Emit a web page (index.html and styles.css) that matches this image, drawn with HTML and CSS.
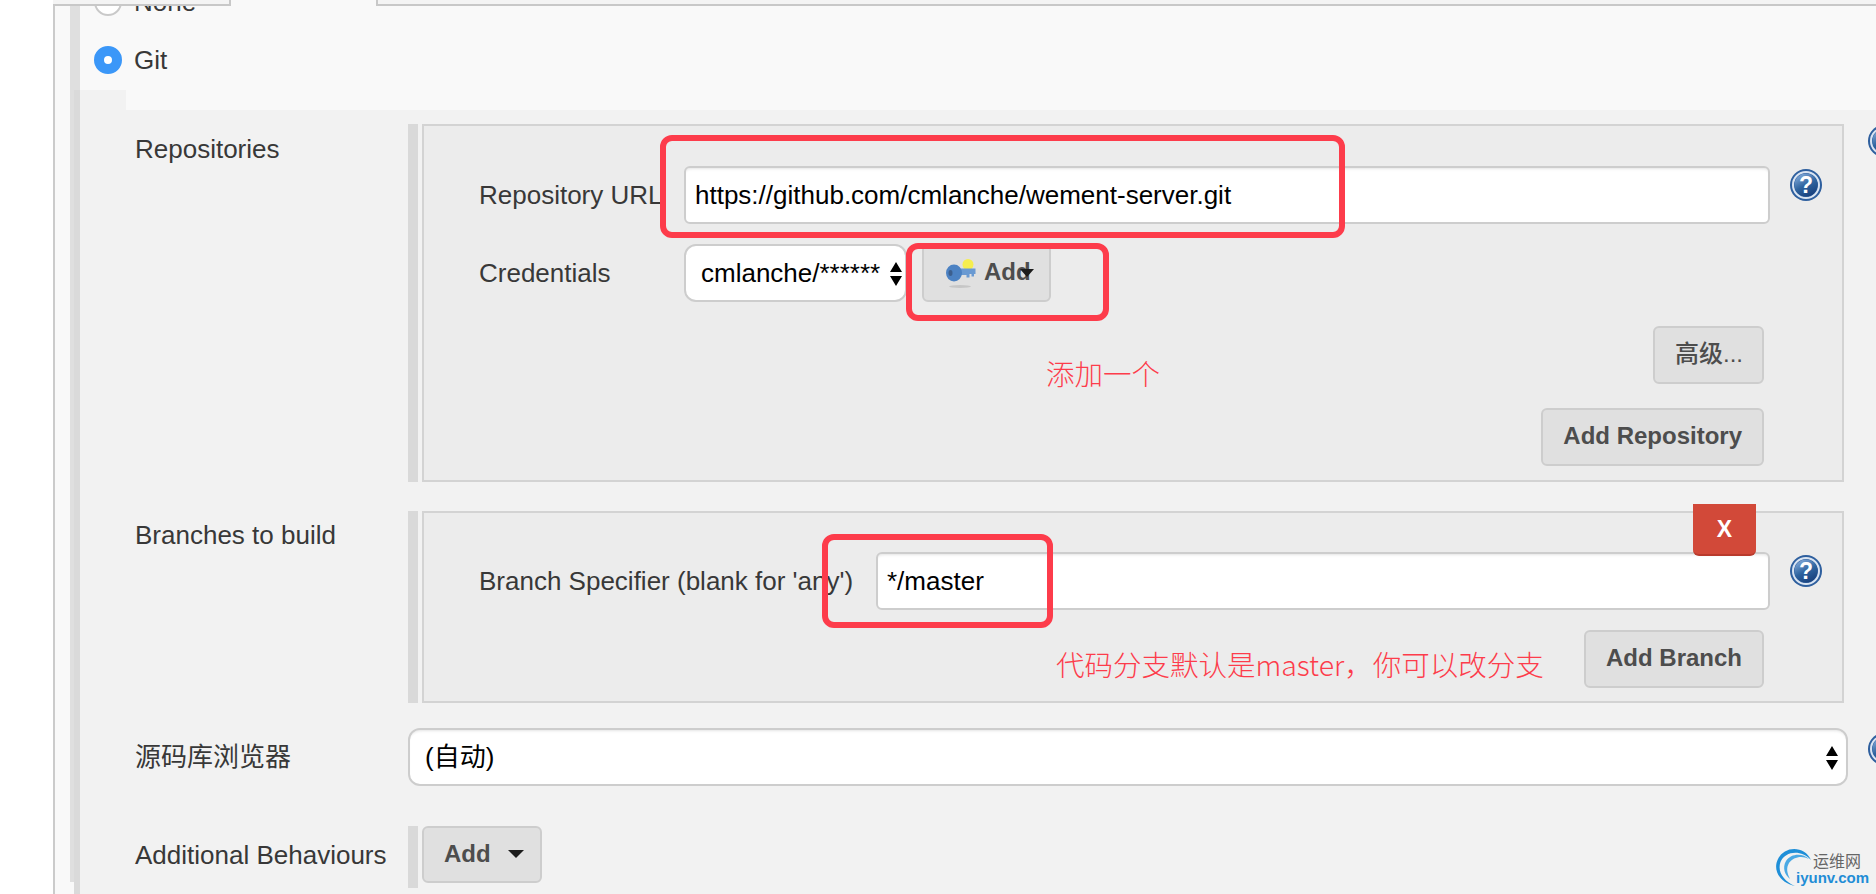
FILE: index.html
```html
<!DOCTYPE html>
<html lang="zh-CN">
<head>
<meta charset="utf-8">
<title>Git</title>
<link rel="stylesheet" href="styles.css">
</head>
<body>
<svg class="defs" width="0" height="0" aria-hidden="true">
  <defs>
    <linearGradient id="helpFill" x1="0.2" y1="0.05" x2="0.7" y2="1">
      <stop offset="0" stop-color="#7ea6d6"/>
      <stop offset="0.5" stop-color="#2f649f"/>
      <stop offset="1" stop-color="#173f7c"/>
    </linearGradient>
    <symbol id="help" viewBox="0 0 32 32">
      <circle cx="16" cy="16" r="16" fill="#2e5f9e"/>
      <circle cx="16" cy="16" r="13" fill="none" stroke="#d9e4f2" stroke-width="2"/>
      <circle cx="16" cy="16" r="11.5" fill="url(#helpFill)"/>
      <text x="16" y="24" text-anchor="middle" class="help-mark">?</text>
    </symbol>
    <symbol id="updown" viewBox="0 0 12 24">
      <path d="M6 0 12 10H0Z M0 14H12L6 24Z" fill="#000"/>
    </symbol>
  </defs>
</svg>

<div class="page">
  <div class="frame">
    <div class="tabs">
      <div class="tab tab-first"></div>
      <div class="tab tab-rest"></div>
    </div>
    <div class="section">
      <div class="radio-row radio-none"><span class="radio"></span><span class="radio-text">None</span></div>
      <div class="radio-row radio-git"><span class="radio radio-on"></span><span class="radio-text">Git</span></div>

      <div class="git">
        <div class="notch"></div>
        <div class="git-body">

          <div class="row">
            <div class="row-label row-label-repo">Repositories</div>
            <div class="group">
              <div class="panel panel-repo">
                <div class="fld">
                  <div class="fld-label">Repository URL</div>
                  <div class="input">https://github.com/cmlanche/wement-server.git</div>
                  <svg class="help"><use href="#help"/></svg>
                </div>
                <div class="fld fld-cred">
                  <div class="fld-label">Credentials</div>
                  <div class="select select-cred">cmlanche/******<svg class="updown"><use href="#updown"/></svg></div>
                  <div class="btn btn-cred">
                    <svg class="key" viewBox="0 0 30 30" aria-hidden="true">
                      <ellipse cx="14" cy="28.500" rx="11" ry="1.500" fill="#c6c6c6"/>
                      <circle cx="22" cy="6.500" r="5.500" fill="#f6ee4e"/>
                      <path d="M12 10.500H29.500V16H28V18.500H25.500V16H23.500V19.500H20.500V17H12Z" fill="#6a9ad2"/>
                      <ellipse cx="8" cy="15" rx="8" ry="8.500" fill="#4c82c3"/>
                      <ellipse cx="4.500" cy="15" rx="2" ry="3" fill="#3c5f8e"/>
                    </svg>
                    <span>Add</span>
                    <i class="caret caret-over"></i>
                  </div>
                </div>
                <div class="actions"><div class="btn btn-adv">高级...</div></div>
                <div class="actions"><div class="btn">Add Repository</div></div>
              </div>
              <svg class="help help-outer"><use href="#help"/></svg>
            </div>
          </div>

          <div class="row row-branch">
            <div class="row-label">Branches to build</div>
            <div class="group">
              <div class="panel panel-branch">
                <div class="btn-x">X</div>
                <div class="fld">
                  <div class="fld-label fld-label-wide">Branch Specifier (blank for 'any')</div>
                  <div class="input">*/master</div>
                  <svg class="help"><use href="#help"/></svg>
                </div>
                <div class="actions actions-branch"><div class="btn">Add Branch</div></div>
              </div>
            </div>
          </div>

          <div class="row row-browser">
            <div class="row-label row-label-mid">源码库浏览器</div>
            <div class="select select-full">(自动)<svg class="updown"><use href="#updown"/></svg></div>
            <svg class="help help-browser"><use href="#help"/></svg>
          </div>

          <div class="row row-behave">
            <div class="row-label row-label-behave">Additional Behaviours</div>
            <div class="add-wrap">
              <div class="btn btn-add">Add<i class="caret"></i></div>
            </div>
          </div>

        </div>
      </div>
    </div>
  </div>

  <div class="mark mark-url"></div>
  <div class="mark mark-add"></div>
  <div class="mark mark-branch"></div>
  <div class="note note-add">添加一个</div>
  <div class="note note-branch">代码分支默认是master&#xFF0C;你可以改分支</div>

  <div class="logo">
    <svg class="logo-arc" viewBox="0 0 50 42" aria-hidden="true">
      <path d="M38 14C32 0 12 -1 5 13C-1 25 8 37 22 40C11 35 4 26 7.500 16C12 5 28 3 38 14Z" fill="#1f8fd8"/>
      <path d="M36 13C30 7 18 7 13 15C9 22 12 29 17 33C14 27 13 22 16 17C20 11 29 9 36 13Z" fill="#4aa9e4"/>
    </svg>
    <div class="logo-cn">运维网</div>
    <div class="logo-en">iyunv.com</div>
  </div>
</div>
</body>
</html>
```

FILE: styles.css
```css
* { box-sizing: border-box; }

html, body {
  margin: 0;
  padding: 0;
  background: #fff;
}

body {
  font-family: "Liberation Sans", "Noto Sans CJK SC", sans-serif;
  font-size: 26px;
  color: #383838;
}

.defs { position: absolute; }

.page {
  position: relative;
  width: 1876px;
  height: 894px;
  padding-left: 53px;
  overflow: hidden;
}

.frame {
  height: 100%;
  border-left: 2px solid #cbcbcb;
  background: #f9f9f9;
}

/* tabs */
.tabs {
  position: relative;
  z-index: 1;
  display: flex;
  height: 6px;
  margin-left: -2px;
  justify-content: space-between;
}

.tab {
  background: #f4f4f4;
  border-bottom: 2px solid #c8c8c8;
}

.tab-first {
  width: 178px;
  border-right: 2px solid #c8c8c8;
}

.tab-rest {
  flex: 0 0 1500px;
  border-left: 2px solid #c8c8c8;
}

/* radios */
.section {
  height: 100%;
  margin-left: 15px;
  border-left: 10px solid #dfdfdf;
}

.radio-row {
  display: flex;
  align-items: center;
  height: 28px;
  padding-left: 14px;
  gap: 12px;
}

.radio-none { margin-top: -18px; }
.radio-git { margin-top: 30px; }

.radio {
  width: 28px;
  height: 28px;
  flex: none;
  border: 2px solid #c9c9c9;
  border-radius: 50%;
  background: #fff;
}

.radio-on {
  border: 10px solid #3b97f8;
}

/* git block */
.git {
  margin-top: 16px;
  margin-left: -6px;
  border-left: 6px solid #dadada;
}

.notch {
  width: 46px;
  height: 20px;
  background: #f2f2f2;
}

.git-body {
  height: 790px;
  padding-top: 14px;
  background: #f2f2f2;
}

.row { display: flex; }

.row-label {
  flex: none;
  width: 328px;
  padding-left: 55px;
  line-height: 48px;
}

.row-label-repo { padding-top: 1px; }
.row-label-mid { align-self: center; }
.row-label-behave { align-self: center; padding-bottom: 4px; }

.row-branch { margin-top: 29px; }
.row-browser { margin-top: 25px; }
.row-behave { margin-top: 40px; }

.group {
  position: relative;
  display: flex;
  padding-left: 14px;
}

.panel {
  position: relative;
  width: 1422px;
  border: 2px solid #d3d3d3;
  background: #ececec;
}

.group::before,
.add-wrap::before {
  content: "";
  position: absolute;
  left: 0;
  top: 0;
  bottom: 0;
  width: 10px;
  background: #d9d9d9;
}

.panel-repo { height: 358px; padding-top: 40px; }
.panel-branch { height: 192px; padding-top: 39px; }

.fld {
  display: flex;
  align-items: center;
  padding-right: 20px;
}

.fld-cred { margin-top: 20px; }

.fld-label {
  flex: none;
  width: 260px;
  padding-left: 55px;
  white-space: nowrap;
}

.fld-label-wide { width: 452px; }

.input {
  flex: 1;
  height: 58px;
  padding-left: 9px;
  border: 2px solid #cdcdcd;
  border-radius: 6px;
  background: #fff;
  color: #000;
  line-height: 54px;
  box-shadow: inset 0 3px 3px -2px #e4e4e4;
  white-space: nowrap;
}

.help {
  flex: none;
  align-self: flex-start;
  width: 32px;
  height: 32px;
  margin-top: 3px;
  margin-left: 20px;
}

.help-mark {
  fill: #fff;
  font-family: "Liberation Sans", sans-serif;
  font-size: 23px;
  font-weight: 700;
}

.help-outer {
  margin-top: 1px;
  margin-left: 24px;
}

.help-browser { margin-top: 5px; }

.select {
  position: relative;
  flex: none;
  height: 58px;
  border: 2px solid #cdcdcd;
  border-radius: 12px;
  background: #fff;
  color: #000;
  line-height: 54px;
  white-space: nowrap;
}

.select-cred {
  width: 223px;
  padding-left: 15px;
}

.select-full {
  width: 1440px;
  padding-left: 15px;
  box-shadow: inset 0 3px 3px -2px #e4e4e4;
}

.updown {
  position: absolute;
  top: 16px;
  right: 3px;
  width: 12px;
  height: 24px;
}

.select-full .updown { right: 8px; }

/* buttons */
.btn {
  position: relative;
  display: flex;
  align-items: center;
  flex: none;
  height: 58px;
  padding: 0 20px 3px;
  border: 2px solid #cdcdcd;
  border-radius: 6px;
  background: #e0e0e0;
  color: #4d4d4d;
  font-size: 24px;
  font-weight: 700;
  line-height: 48px;
  white-space: nowrap;
}

.btn-cred {
  width: 129px;
  margin-left: 15px;
  padding: 0 0 3px 22px;
  gap: 8px;
}

.key {
  flex: none;
  width: 30px;
  height: 30px;
  margin-top: 3px;
}

.btn-adv {
  width: 111px;
  padding: 0 0 3px 20px;
  font-weight: 500;
}

.actions {
  display: flex;
  justify-content: flex-end;
  margin-top: 24px;
  padding-right: 78px;
}

.actions-branch { margin-top: 20px; }

.caret {
  display: block;
  width: 0;
  height: 0;
  margin-left: 17px;
  border-left: 8px solid transparent;
  border-right: 8px solid transparent;
  border-top: 8px solid #1c1c1c;
}

.caret-over {
  position: absolute;
  left: 96px;
  top: 23px;
  margin: 0;
  border-left-width: 7px;
  border-right-width: 7px;
}

.add-wrap {
  position: relative;
  height: 62px;
  padding-left: 14px;
}

.btn-add {
  width: 120px;
  height: 57px;
  padding-bottom: 1px;
}

.btn-x {
  position: absolute;
  z-index: 2;
  top: -9px;
  right: 86px;
  width: 63px;
  height: 52px;
  border-bottom: 2px solid #b93a2c;
  border-radius: 0 0 6px 6px;
  background: #d24939;
  color: #fff;
  font-size: 23px;
  font-weight: 700;
  line-height: 50px;
  text-align: center;
}

/* annotations drawn over the screenshot */
.mark {
  position: absolute;
  z-index: 3;
  border: 6px solid #fd3c4b;
  border-radius: 12px;
}

.mark-url { left: 660px; top: 135px; width: 685px; height: 103px; }
.mark-add { left: 906px; top: 243px; width: 203px; height: 78px; }
.mark-branch { left: 822px; top: 534px; width: 231px; height: 94px; }

.note {
  position: absolute;
  z-index: 3;
  color: #fd3c4b;
  font-family: "Noto Sans CJK SC", "Liberation Sans", sans-serif;
  font-size: 28.5px;
  font-weight: 300;
  line-height: 40px;
  white-space: nowrap;
}

.note-add { left: 1046px; top: 353px; }
.note-branch { left: 1056px; top: 644px; }

.logo {
  position: absolute;
  z-index: 3;
  left: 1773px;
  top: 846px;
  width: 100px;
  height: 42px;
}

.logo-arc {
  position: absolute;
  left: 0;
  top: 0;
  width: 50px;
  height: 42px;
}

.logo-cn {
  position: absolute;
  left: 40px;
  top: 4px;
  color: #666;
  font-family: "Noto Sans CJK SC", sans-serif;
  font-size: 16px;
  line-height: 20px;
}

.logo-en {
  position: absolute;
  left: 23px;
  top: 22px;
  color: #1f8dd6;
  font-size: 15px;
  font-weight: 700;
  line-height: 20px;
}
```
